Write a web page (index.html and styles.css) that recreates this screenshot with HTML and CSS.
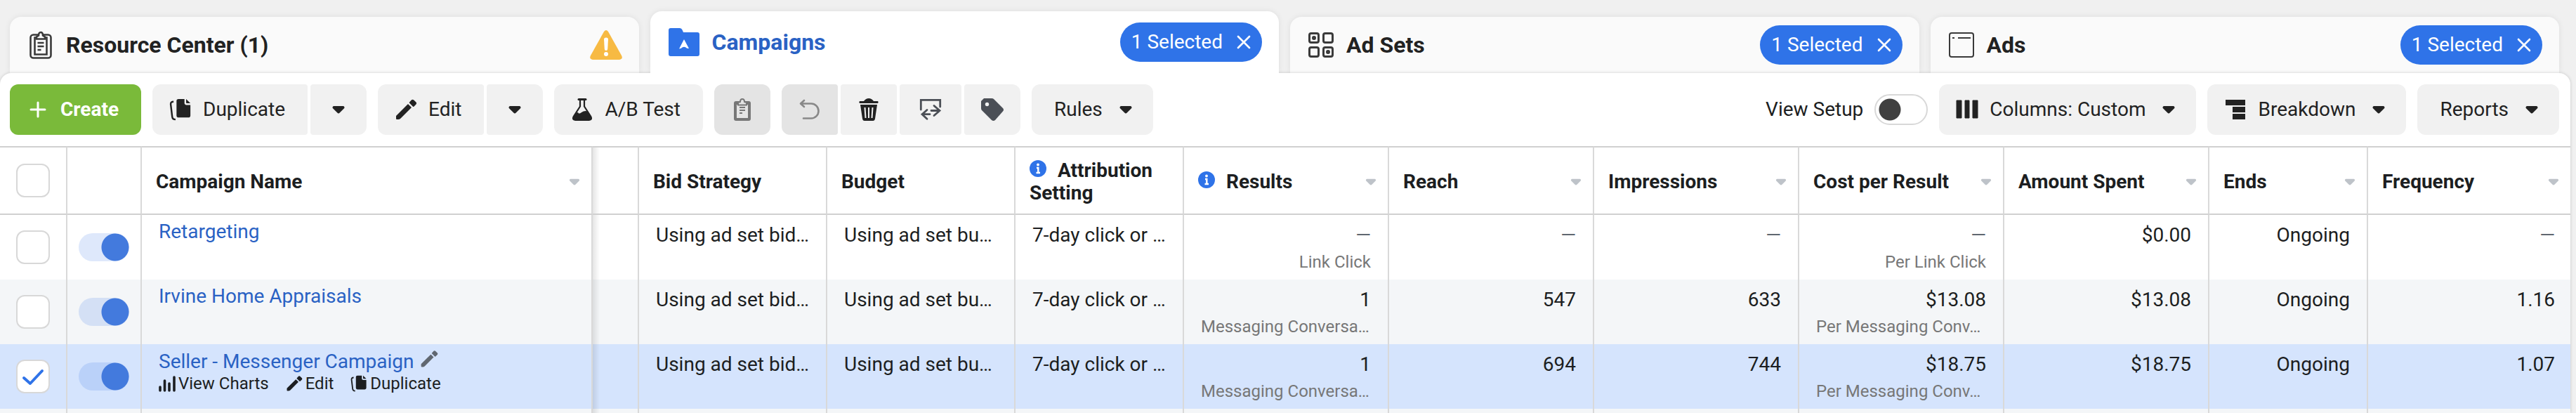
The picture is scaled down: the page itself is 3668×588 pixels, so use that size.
FILE: index.html
```
<!DOCTYPE html>
<html lang="en">
<head>
<meta charset="utf-8">
<title>Campaigns</title>
<link rel="stylesheet" href="styles.css">
</head>
<body>
<svg class="sprite" aria-hidden="true">
  <symbol id="caret" viewBox="1 0 18 12"><path d="M3.500 1h13a2 2 0 0 1 1.500 3.300l-6.300 6.300a2.400 2.400 0 0 1-3.400 0L2 4.300A2 2 0 0 1 3.500 1z" fill="currentColor"/></symbol>
  <symbol id="close" viewBox="0 0 20 20"><path d="M2 2l16 16M18 2L2 18" stroke="currentColor" stroke-width="2.600" stroke-linecap="round"/></symbol>
  <symbol id="pencil" viewBox="0 0 32 32"><path d="M2 29V25L18.500 8.500Q19 8 19.500 8.500L24 13 8.500 28.500Q7 30 5 30H3Q2 30 2 29zM20.800 6.600Q20.500 6 21 5.500L24 2.300Q25.500 1 27 2.300L30.500 5.600Q31.800 7 30.500 8.500L27.300 11.700Q26.500 12.300 26 11.800z" fill="currentColor"/></symbol>
  <symbol id="copy" viewBox="0 0 34 34"><path d="M14 1h9v6q0 3 3 3h6v16q0 3-3 3H14q-3 0-3-3V4q0-3 3-3zM25.500 1l6.500 6.500h-5.500q-1 0-1-1z" fill="currentColor"/><path d="M6.500 5Q2 5 2.200 9L4.500 28Q5 32 9.500 32" fill="none" stroke="currentColor" stroke-width="2.600"/></symbol>
  <symbol id="info" viewBox="0 0 24 24"><circle cx="12" cy="12" r="12" fill="#2f73e8"/><circle cx="12" cy="6.500" r="1.900" fill="#fff"/><path d="M10 11h2.300v6.500M9.500 18h5.500" stroke="#fff" stroke-width="2.400" fill="none"/></symbol>
</svg>

<nav class="tabs">
  <a class="tab" href="#resources">
    <svg class="tab-icon" viewBox="-2 0 36 40" fill="none" stroke="#3a3a3a" stroke-width="2.600"><rect x="1.500" y="5.500" width="29" height="33" rx="4"/><path d="M9 9.500H7.500v24h17v-24H23"/><path d="M10 11.500V8.500l3-2q0-4.500 3-4.500t3 4.500l3 2v3z" fill="#fafafa"/><path d="M11.500 17h9M11.500 22h9M11.500 27h5"/></svg>
    <span class="tab-name">Resource Center (1)</span>
    <svg class="warning" viewBox="0 0 46 42"><path d="M20 2q3-4 6 0l19 34q2.500 5-3 6H4q-5.500-1-3-6z" fill="#f7ba43"/><path d="M20 13q0-2.500 3-2.500t3 2.500l-.8 14q-.2 2-2.200 2t-2.200-2z" fill="#fff"/><circle cx="23" cy="34" r="3" fill="#fff"/></svg>
  </a>
  <div class="tab tab-active">
    <svg class="tab-icon icon-folder" viewBox="0 0 44 40"><path d="M3 0h13q2.500 0 3.500 2.500L21 6h20q3 0 3 3v28q0 3-3 3H3q-3 0-3-3V3q0-3 3-3z" fill="#2f73e8"/><path d="M22 16l7 13q-3.500 0-4.500-1.500-2.500-1.500-5 0Q18.500 29 15 29.500z" fill="#fff"/></svg>
    <a class="tab-name" href="#campaigns">Campaigns</a>
    <button class="pill">1 Selected<svg class="close"><use href="#close"/></svg></button>
  </div>
  <div class="tab">
    <svg class="tab-icon icon-grid" viewBox="0 0 36 36" fill="none" stroke="#3a3a3a" stroke-width="3"><rect x="1.500" y="1.500" width="13" height="13" rx="2.500"/><rect x="21.500" y="1.500" width="13" height="13" rx="2.500"/><rect x="1.500" y="21.500" width="13" height="13" rx="2.500"/><rect x="21.500" y="21.500" width="13" height="13" rx="2.500"/><circle cx="8" cy="8" r="1.500"/><circle cx="28" cy="28" r="1.500"/></svg>
    <a class="tab-name" href="#adsets">Ad Sets</a>
    <button class="pill">1 Selected<svg class="close"><use href="#close"/></svg></button>
  </div>
  <div class="tab">
    <svg class="tab-icon icon-grid" viewBox="0 0 36 36" fill="none" stroke="#3a3a3a" stroke-width="2"><rect x="1" y="1" width="34" height="34" rx="3"/><path d="M5 8h3M13 8h18"/></svg>
    <a class="tab-name" href="#ads">Ads</a>
    <button class="pill">1 Selected<svg class="close"><use href="#close"/></svg></button>
  </div>
</nav>

<main class="panel">
  <div class="toolbar">
    <button class="btn btn-create"><svg class="plus" viewBox="0 0 24 24"><path d="M12 2v20M2 12h20" stroke="#fff" stroke-width="3" stroke-linecap="round"/></svg>Create</button>
    <div class="group">
      <button class="btn btn-icon-text"><svg class="icon"><use href="#copy"/></svg>Duplicate</button>
      <button class="btn btn-square" aria-label="More duplicate options"><svg class="caret"><use href="#caret"/></svg></button>
    </div>
    <div class="group">
      <button class="btn btn-icon-text"><svg class="icon"><use href="#pencil"/></svg>Edit</button>
      <button class="btn btn-square" aria-label="More edit options"><svg class="caret"><use href="#caret"/></svg></button>
    </div>
    <button class="btn btn-icon-text"><svg class="icon" viewBox="0 0 32 32"><path d="M11 1.500h10" stroke="#222" stroke-width="3" stroke-linecap="round"/><path d="M13 2v9.500L3.700 26q-2.200 4.500 2.500 4.800h19.600q4.700-.3 2.500-4.800L19 11.500V2" fill="none" stroke="#222" stroke-width="2.200"/><path d="M7.500 20.500l2.500-.5 1 1.500q1.500.5 4-1.500 4-3 9-1.500l5 8q1.500 4-3 4.500H6q-4.500-.5-3-4.500z" fill="#222"/></svg>A/B Test</button>
    <button class="btn btn-square btn-off" disabled aria-label="Paste"><svg class="icon" viewBox="0 0 32 32"><path d="M7 4h18q3 0 3 3v22q0 3-3 3H7q-3 0-3-3V7q0-3 3-3z" fill="#777"/><path d="M8 9h16v19H8z" fill="#e4e4e4"/><path d="M10 9.500V6l3-1q0-4 3-4t3 4l3 1v3.500z" fill="#e4e4e4" stroke="#777" stroke-width="2"/><path d="M12 13h8M12 17h8M12 21h4" stroke="#777" stroke-width="2"/></svg></button>
    <div class="group">
      <button class="btn btn-square btn-off" disabled aria-label="Undo"><svg class="icon" viewBox="0 0 32 32"><path d="M8 3L3 7.500l5 4.500M4 7.500h14a10.500 10.500 0 0 1 0 21H7" fill="none" stroke="#888" stroke-width="2.600" stroke-linecap="round" stroke-linejoin="round"/></svg></button>
      <button class="btn btn-square" aria-label="Delete"><svg class="icon" viewBox="0 0 32 32"><path d="M3 4h6q3-4 7-4t7 4h6q1.500 1.500 0 3H3q-1.500-1.500 0-3zM4 9h24l-3 20q-.5 3-3 3H10q-2.500 0-3-3z" fill="#222"/><path d="M10.500 13l1 15M16 13v15M21.500 13l-1 15" stroke="#f1f1f1" stroke-width="2"/></svg></button>
      <button class="btn btn-square btn-wide" aria-label="Move"><svg class="icon" viewBox="0 0 32 32"><path d="M2.300 16V2.300h27.400V12M29 17.500H17M21 10.500l8 7-8 7M4 22.700h11M11 16.500l-7 6.200 7 6.500" fill="none" stroke="#4b4f56" stroke-width="2.800" stroke-linecap="round"/></svg></button>
      <button class="btn btn-square" aria-label="Tag"><svg class="icon" viewBox="0 0 32 32"><path d="M4 0h11q2 0 3 1l13 13q2 2 0 4.500L20 31q-2.500 2-5 0L1 17q-1-1-1-3V4z" fill="#4b4f56"/><circle cx="8.500" cy="8.500" r="2.700" fill="#f1f1f1"/></svg></button>
    </div>
    <button class="btn btn-menu">Rules<svg class="caret"><use href="#caret"/></svg></button>
    <label class="setup">View Setup<input type="checkbox" role="switch" class="setup-switch"></label>
    <button class="btn btn-menu-icon"><svg class="icon" viewBox="0 0 32 32"><path d="M1 3h7v25H1zM13 3h6v25h-6zM24 3h7v25h-7z" fill="#222" stroke="#222" stroke-linejoin="round"/></svg>Columns: Custom<svg class="caret"><use href="#caret"/></svg></button>
    <button class="btn btn-menu-icon"><svg class="icon" viewBox="0 0 32 32"><path d="M2 2h28v8H2zM12 12h18v8H12zM12 22h18v8H12z" fill="#222"/></svg>Breakdown<svg class="caret"><use href="#caret"/></svg></button>
    <button class="btn btn-menu">Reports<svg class="caret"><use href="#caret"/></svg></button>
  </div>

  <table class="grid">
    <colgroup><col class="c-check"><col class="c-switch"><col class="c-name"><col class="c-gap"><col class="c-text"><col class="c-text"><col class="c-attr"><col class="c-num"><col class="c-num"><col class="c-num"><col class="c-num"><col class="c-num"><col class="c-ends"><col></colgroup>
    <thead>
      <tr>
        <th class="check"><input type="checkbox" class="box" aria-label="Select all"></th>
        <th></th>
        <th class="name"><span class="head">Campaign Name<svg class="sort"><use href="#caret"/></svg></span></th>
        <th class="gap"></th>
        <th>Bid Strategy</th>
        <th>Budget</th>
        <th><svg class="info"><use href="#info"/></svg>Attribution Setting</th>
        <th><span class="head"><span><svg class="info"><use href="#info"/></svg>Results</span><svg class="sort"><use href="#caret"/></svg></span></th>
        <th><span class="head">Reach<svg class="sort"><use href="#caret"/></svg></span></th>
        <th><span class="head">Impressions<svg class="sort"><use href="#caret"/></svg></span></th>
        <th><span class="head">Cost per Result<svg class="sort"><use href="#caret"/></svg></span></th>
        <th><span class="head">Amount Spent<svg class="sort"><use href="#caret"/></svg></span></th>
        <th><span class="head">Ends<svg class="sort"><use href="#caret"/></svg></span></th>
        <th><span class="head">Frequency<svg class="sort"><use href="#caret"/></svg></span></th>
      </tr>
    </thead>
    <tbody>
      <tr>
        <td class="check"><input type="checkbox" class="box" aria-label="Select Retargeting"></td>
        <td class="check"><input type="checkbox" role="switch" class="switch" checked aria-label="Retargeting on"></td>
        <td class="name"><a href="#c1">Retargeting</a></td>
        <td class="gap"></td>
        <td>Using ad set bid…</td><td>Using ad set bu…</td><td>7-day click or …</td>
        <td class="num"><span class="none">—</span><small>Link Click</small></td>
        <td class="num"><span class="none">—</span></td>
        <td class="num"><span class="none">—</span></td>
        <td class="num"><span class="none">—</span><small>Per Link Click</small></td>
        <td class="num">$0.00</td><td class="num">Ongoing</td><td class="num"><span class="none">—</span></td>
      </tr>
      <tr class="striped">
        <td class="check"><input type="checkbox" class="box" aria-label="Select Irvine Home Appraisals"></td>
        <td class="check"><input type="checkbox" role="switch" class="switch" checked aria-label="Irvine Home Appraisals on"></td>
        <td class="name"><a href="#c2">Irvine Home Appraisals</a></td>
        <td class="gap"></td>
        <td>Using ad set bid…</td><td>Using ad set bu…</td><td>7-day click or …</td>
        <td class="num">1<small class="cut">Messaging Conversa…</small></td>
        <td class="num">547</td><td class="num">633</td>
        <td class="num">$13.08<small class="cut">Per Messaging Conv…</small></td>
        <td class="num">$13.08</td><td class="num">Ongoing</td><td class="num">1.16</td>
      </tr>
      <tr class="selected">
        <td class="check"><input type="checkbox" class="box" checked aria-label="Select Seller - Messenger Campaign"></td>
        <td class="check"><input type="checkbox" role="switch" class="switch" checked aria-label="Seller - Messenger Campaign on"></td>
        <td class="name"><a href="#c3">Seller - Messenger Campaign</a><button class="rename" aria-label="Rename"><svg class="rename-icon"><use href="#pencil"/></svg></button>
          <div class="actions">
            <button class="action"><svg class="action-icon" viewBox="0 0 24 24"><path d="M2 17v5M8.500 8v14M15 12v10M22 3v19" stroke="#1c1e21" stroke-width="3.600" stroke-linecap="round"/></svg>View Charts</button>
            <button class="action"><svg class="action-icon"><use href="#pencil"/></svg>Edit</button>
            <button class="action"><svg class="action-icon"><use href="#copy"/></svg>Duplicate</button>
          </div>
        </td>
        <td class="gap"></td>
        <td>Using ad set bid…</td><td>Using ad set bu…</td><td>7-day click or …</td>
        <td class="num">1<small class="cut">Messaging Conversa…</small></td>
        <td class="num">694</td><td class="num">744</td>
        <td class="num">$18.75<small class="cut">Per Messaging Conv…</small></td>
        <td class="num">$18.75</td><td class="num">Ongoing</td><td class="num">1.07</td>
      </tr>
      <tr class="striped peek">
        <td></td><td></td><td></td><td class="gap"></td><td></td><td></td><td></td><td></td><td></td><td></td><td></td><td></td><td></td><td></td>
      </tr>
    </tbody>
  </table>
</main>
</body>
</html>
```

FILE: styles.css
```
* { box-sizing: border-box; }

body {
  margin: 0;
  background: #f0f0f0;
  color: #1c1e21;
  font: 28px/32px Roboto, sans-serif;
}

button { font: inherit; color: inherit; border: 0; margin: 0; padding: 0; cursor: pointer; }
a { color: inherit; text-decoration: none; }
svg { display: block; flex: none; }
.sprite { position: absolute; width: 0; height: 0; }

.tabs {
  display: flex;
  align-items: flex-end;
  gap: 16px;
  padding: 16px 24px 0 14px;
}
.tab {
  display: flex;
  align-items: center;
  flex: 1;
  height: 80px;
  padding: 0 24px 0 26px;
  border-radius: 16px 16px 0 0;
  background: #fafafa;
  box-shadow: 0 0 8px rgba(0, 0, 0, .08);
  color: #222;
}
.tab-active {
  position: relative;
  z-index: 1;
  height: 88px;
  background: #fff;
  color: #2a62c4;
  clip-path: inset(-8px -8px 0 -8px);
}
.tab-icon { width: 36px; height: 40px; }
.icon-folder { width: 44px; }
.icon-grid { height: 36px; }
.tab-name {
  margin: 0 auto 0 18px;
  font-size: 32px;
  font-weight: 700;
}
.warning { width: 46px; height: 42px; }
.pill {
  display: flex;
  align-items: center;
  gap: 20px;
  height: 56px;
  padding: 0 16px;
  border-radius: 28px;
  background: #2f73e8;
  color: #fff;
}
.close { width: 20px; height: 20px; }

.panel {
  position: relative;
  margin-right: 8px;
  border-radius: 16px 16px 0 0;
  background: #fff;
  box-shadow: 0 0 4px rgba(0, 0, 0, .18);
}

.toolbar {
  display: flex;
  align-items: center;
  gap: 16px;
  padding: 16px 16px 16px 14px;
}
.group { display: flex; gap: 4px; }
.btn {
  display: flex;
  align-items: center;
  justify-content: center;
  height: 72px;
  border-radius: 12px;
  background: #f1f1f1;
  color: #222;
}
.group .btn { border-radius: 4px; }
.group .btn:first-child { border-radius: 12px 4px 4px 12px; }
.group .btn:last-child { border-radius: 4px 12px 12px 4px; }
.btn-create {
  gap: 20px;
  padding: 0 32px 0 28px;
  background: #7aba3a;
  color: #fff;
  font-weight: 700;
}
.btn-icon-text { gap: 16px; padding: 0 32px 0 24px; }
.btn-menu { gap: 24px; padding: 0 30px 0 32px; }
.btn-menu-icon { gap: 16px; padding: 0 30px 0 24px; }
.btn-menu-icon .caret { margin-left: 8px; }
.btn-square { width: 80px; }
.btn-wide { width: 88px; }
.btn-off { background: #e4e4e4; }
.plus { width: 24px; height: 24px; }
.icon { width: 32px; height: 32px; }
.caret { width: 18px; height: 12px; }

.setup {
  display: flex;
  align-items: center;
  gap: 16px;
  margin-left: auto;
}
.setup-switch {
  appearance: none;
  width: 76px;
  height: 44px;
  margin: 0;
  border: 2px solid #d8d8d8;
  border-radius: 22px;
  background: radial-gradient(circle at 20px 20px, #404040 15px, transparent 16px) #fff;
}

.grid {
  width: 100%;
  table-layout: fixed;
  border-collapse: separate;
  border-spacing: 0;
}
.c-check { width: 96px; }
.c-switch { width: 106px; }
.c-name { width: 642px; }
.c-gap { width: 66px; }
.c-text { width: 268px; }
.c-attr { width: 240px; }
.c-num { width: 292px; }
.c-ends { width: 226px; }

th, td {
  padding: 0;
  border-right: 2px solid #d9d9d9;
  text-align: left;
}
th {
  height: 98px;
  padding: 4px 0 0 20px;
  border-top: 2px solid #d0d0d0;
  border-bottom: 2px solid #d0d0d0;
  font-weight: 700;
}
td {
  height: 92px;
  padding: 13px 24px 0;
  vertical-align: top;
  white-space: nowrap;
}
td:last-child, th:last-child { border-right: 0; }
td:last-child { padding-right: 22px; }
.striped td { background: #f4f6f8; }
.selected td { background: #d5e4fd; }
.peek td { height: 6px; padding: 0; }
.gap { background-image: linear-gradient(90deg, rgba(0, 0, 0, .1), transparent 10px) !important; }

th.check, td.check { padding: 0; text-align: center; vertical-align: middle; }
.box {
  appearance: none;
  display: block;
  width: 48px;
  height: 48px;
  margin: 0 auto;
  border: 2px solid #d8d8d8;
  border-radius: 12px;
  background: #fff;
}
.box:checked {
  background: #fff url("data:image/svg+xml,%3Csvg xmlns='http://www.w3.org/2000/svg' viewBox='0 0 44 44'%3E%3Cpath d='M9 24l9 8L35 14' fill='none' stroke='%232f73e8' stroke-width='4' stroke-linecap='round' stroke-linejoin='round'/%3E%3C/svg%3E");
}
.switch {
  appearance: none;
  display: block;
  width: 72px;
  height: 40px;
  margin: 0 auto;
  border-radius: 20px;
  background: radial-gradient(circle at 52px 20px, #437add 19px, transparent 20px) rgba(47, 115, 232, .16);
}

.head {
  display: flex;
  align-items: center;
  justify-content: space-between;
  padding-right: 16px;
}
.sort { width: 16px; height: 10px; color: #bec3c9; }
.info { display: inline-block; width: 24px; height: 24px; margin-right: 16px; }

td.name { padding-top: 8px; }
td.name > a { color: #2a62c4; }
.rename { display: inline-block; margin-left: 8px; background: none; color: #606770; }
.rename-icon { width: 26px; height: 26px; }
.actions { display: flex; gap: 24px; margin-top: 1px; }
.action {
  display: flex;
  align-items: center;
  gap: 4px;
  background: none;
  font-size: 24px;
  line-height: 28px;
}
.action-icon { width: 24px; height: 24px; }

.num { text-align: right; }
.none { color: #606770; }
small {
  display: block;
  margin-top: 6px;
  color: #777;
  font-size: 24px;
  line-height: 32px;
}
.cut { text-align: left; }
```
